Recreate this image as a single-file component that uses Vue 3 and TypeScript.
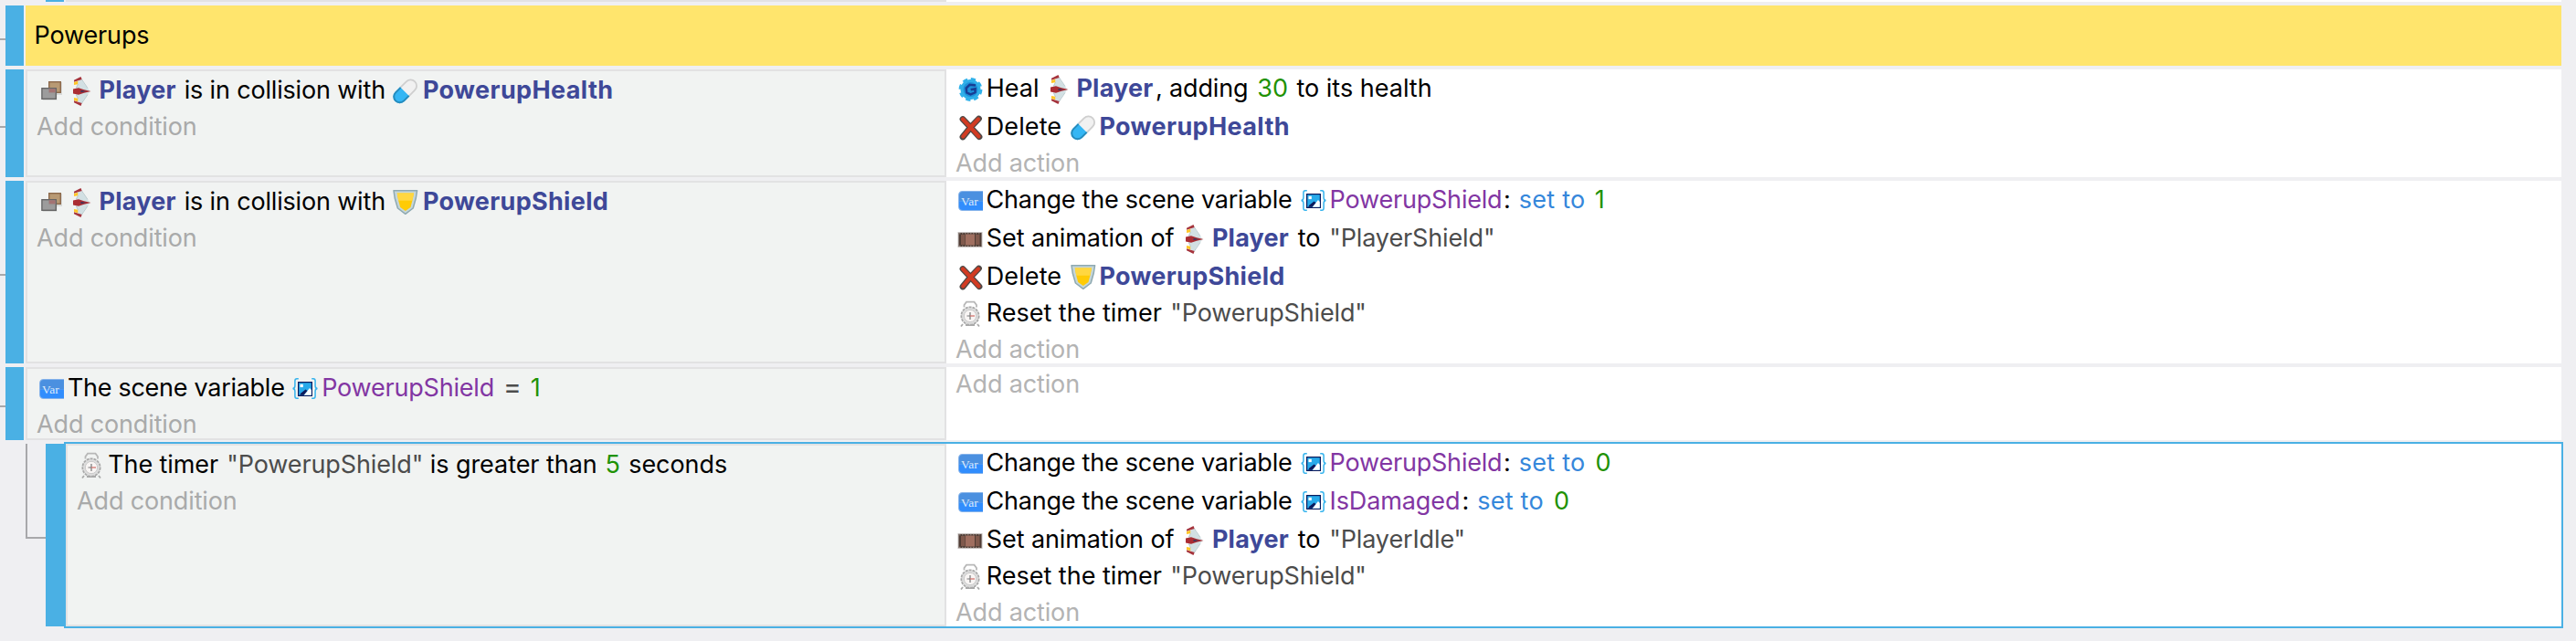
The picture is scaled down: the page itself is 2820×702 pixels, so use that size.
<script setup lang="ts">
import type { CSSProperties } from 'vue'

type Kind = 'icon' | 'text' | 'object' | 'variable' | 'number' | 'string' | 'equals' | 'operator'
interface Part { kind: Kind; at: number; value: string; spacing: number }
interface Line { parts: Part[]; tall: boolean }
interface EventRow { id: string; conditions: Line[]; actions: Line[] }

const p = (kind: Kind, at: number, value: string, spacing = 0): Part => ({ kind, at, value, spacing })
const line = (parts: Part[], tall = true): Line => ({ parts, tall })

const setVariable = (name: string, nameSpacing: number, end: number, value: string): Line =>
  line([
    p('icon', 3, 'var'), p('text', 33.6, 'Change the scene variable', -0.24), p('icon', 378, 'scene'),
    p('variable', 409.6, name, nameSpacing), p('text', end, ':'), p('operator', end + 16.8, 'set to', 0.25),
    p('number', end + (value === '1' ? 99.8 : 100.6), value),
  ])

const setAnimation = (name: string, tall: boolean): Line =>
  line([
    p('icon', 2, 'film'), p('text', 33.8, 'Set animation of', -0.1), p('icon', 252, 'ship'),
    p('object', 280.9, 'Player', 0.22), p('text', 374.8, 'to'), p('string', 409.3, `"${name}"`, -0.13),
  ], tall)

const resetTimer = (): Line =>
  line([p('icon', 4, 'alarm'), p('text', 33.7, 'Reset the timer', 0), p('string', 235.3, '"PowerupShield"', -0.14)], false)

const deleteObject = (icon: string, name: string, spacing: number): Line =>
  line([p('icon', 3, 'cross'), p('text', 33.7, 'Delete', 0.12), p('icon', 126, icon), p('object', 157.4, name, spacing)], false)

const collision = (icon: string, name: string, spacing: number): Line =>
  line([
    p('icon', 4, 'collision'), p('icon', 40, 'ship'), p('object', 68.6, 'Player', 0.22),
    p('text', 161.7, 'is in collision with', -0.17), p('icon', 390, icon), p('object', 422.9, name, spacing),
  ], false)

const events: EventRow[] = [
  {
    id: 'health',
    conditions: [collision('pill', 'PowerupHealth', 0.38)],
    actions: [
      line([
        p('icon', 3, 'gear'), p('text', 33.7, 'Heal'), p('icon', 104, 'ship'), p('object', 132.4, 'Player', 0.22),
        p('text', 219, ', adding', -0.15), p('number', 330.3, '30'), p('text', 373.5, 'to its health'),
      ]),
      deleteObject('pill', 'PowerupHealth', 0.38),
    ],
  },
  {
    id: 'shield',
    conditions: [collision('shield', 'PowerupShield', 0.31)],
    actions: [
      setVariable('PowerupShield', -0.2, 600, '1'),
      setAnimation('PlayerShield', true),
      deleteObject('shield', 'PowerupShield', 0.31),
      resetTimer(),
    ],
  },
  {
    id: 'shielded',
    conditions: [
      line([
        p('icon', 3, 'var'), p('text', 33.9, 'The scene variable', -0.28), p('icon', 280, 'scene'),
        p('variable', 312.2, 'PowerupShield', -0.2), p('equals', 511, '='), p('number', 540.7, '1'),
      ], false),
    ],
    actions: [],
  },
  {
    id: 'expired',
    conditions: [
      line([
        p('icon', 4, 'alarm'), p('text', 34.2, 'The timer', -0.1), p('string', 164.3, '"PowerupShield"', -0.12),
        p('text', 386.7, 'is greater than', -0.05), p('number', 578.5, '5'), p('text', 604.3, 'seconds', -0.07),
      ], false),
    ],
    actions: [
      setVariable('PowerupShield', -0.2, 600, '0'),
      setVariable('IsDamaged', -0.12, 554.4, '0'),
      setAnimation('PlayerIdle', false),
      resetTimer(),
    ],
  },
]

/* Every part fills the room up to where the next one starts. */
function slot(parts: Part[], i: number): CSSProperties {
  const next = parts[i + 1]
  return {
    marginLeft: i === 0 ? `${parts[i].at}px` : undefined,
    width: next ? `${next.at - parts[i].at}px` : undefined,
    letterSpacing: `${parts[i].spacing}px`,
  }
}
</script>

<template>
  <main class="sheet">
    <div class="previous"><i class="handle"></i><i class="left"></i><i class="right"></i></div>

    <section class="event comment">
      <i class="handle"></i>
      <div class="note">Powerups</div>
    </section>

    <section v-for="ev in events" :key="ev.id" class="event" :class="ev.id">
      <i class="handle"></i>
      <div class="panel">
        <div v-for="side in (['conditions', 'actions'] as const)" :key="side" :class="[side, { empty: !ev[side].length }]">
          <div v-for="(ln, n) in ev[side]" :key="n" class="line" :class="{ tall: ln.tall }">
            <span v-for="(part, i) in ln.parts" :key="i" class="part" :class="part.kind" :style="slot(ln.parts, i)">
              <svg v-if="part.kind === 'icon'" width="28" height="40" viewBox="0 0 28 40">
                <g v-if="part.value === 'collision'">
                  <path d="M10 12h14v14H10z" fill="#777" opacity=".2" />
                  <rect x="9.7" y="11.7" width="12.6" height="11.6" fill="#b89a74" stroke="#8d6a4c" stroke-width="1.4" />
                  <rect x="2.7" y="19.7" width="15.6" height="12" fill="#777" opacity=".25" />
                  <rect x="1.9" y="18.7" width="15.4" height="11.6" fill="#999" fill-opacity=".95" stroke="#666" stroke-width="1.4" />
                  <path d="M9.7 19.3h7v4h-7z" fill="#a47373" />
                </g>
                <g v-else-if="part.value === 'ship'">
                  <path d="M4.500 11.500 9 8.500 12 13.500 18.500 22 12 30.500 9 35.500 4.500 32.500 5 29 3 26V18L5 15z" fill="#d2e0e3" />
                  <path d="M9.500 9l6.500 9.500M9.500 35l6.500-9.500M3.500 18l2-4M3.500 26l2 4" fill="none" stroke="#b3c5ca" stroke-width=".9" />
                  <path d="M1 9.800 8.500 6l1.200 3L1 11.800zM1 34.200 8.500 38l1.200-3L1 32.200z" fill="#a5343c" />
                  <path d="M1 12l4.200-1.200v3.400L1 15zM1 32l4.200 1.200v-3.400L1 29z" fill="#ffc629" />
                  <path d="M0 19.500 6 18.200 12 20.300 19.500 22 12 23.700 6 25.800 0 24.500z" fill="#ab2d33" />
                  <path d="M8.500 20.800 14.500 22 8.500 23.200z" fill="#43365a" />
                </g>
                <g v-else-if="part.value === 'pill'">
                  <g transform="rotate(-45 13.500 22)">
                    <path d="M13 14.700H22a7.300 7.300 0 0 1 0 14.600H13z" fill="#f1f1f1" />
                    <path d="M13 15.400H22a6.600 6.600 0 0 1 0 13.200H13" fill="none" stroke="#cfcfcf" stroke-width="1.800" />
                    <path d="M13 14.700H5.200a7.300 7.300 0 0 0 0 14.600H13z" fill="#34b6f4" />
                    <path d="M13 15.600H5.200a6.400 6.400 0 0 0 0 12.800H13" fill="none" stroke="#268bbc" stroke-width="1.900" />
                  </g>
                </g>
                <g v-else-if="part.value === 'shield'">
                  <path d="M1 8.700H26.600L25.300 17 22.200 28 13.800 34.300 5.400 28 2.200 17z" fill="#c5d6d9" stroke="#8ea9b1" stroke-width="1.500" stroke-linejoin="round" />
                  <path d="M4.700 11.500H23L21.300 20 19.500 27 13.800 31 8.200 27 6.300 20z" fill="#ffcb05" />
                  <path d="M4.700 11.500H23L21.500 19.700H6.200z" fill="#ffd740" />
                </g>
                <g v-else-if="part.value === 'gear'">
                  <circle cx="13.500" cy="22" r="11.600" fill="none" stroke="#2fb1ea" stroke-width="2.600" stroke-dasharray="5.300 3.800" />
                  <circle cx="13.500" cy="22" r="11" fill="#2fafe8" />
                  <circle cx="13.500" cy="22" r="8" fill="#1d91d8" />
                  <path d="M19 17.500 12.500 16.800 8.700 20.500 9.300 25.500 13.500 27.500 18.500 25.300 18.600 21.200 13.700 22.200" fill="none" stroke="#173d94" stroke-width="2.500" />
                </g>
                <g v-else-if="part.value === 'cross'" stroke-linecap="round" fill="none">
                  <path d="M5 12.500 13.500 21.500 23 31.700M22.500 12 13.500 21.500 5 32" stroke="#4f4845" stroke-width="6.800" />
                  <path d="M5 12.500 13.500 21.500 22.500 31.500M22 12.500 13.500 21.500 5.300 31.500" stroke="#d23b22" stroke-width="4.200" />
                </g>
                <g v-else-if="part.value === 'var'">
                  <path d="M4.500 11H27V33H4.500A4.500 4.500 0 0 1 0 28.500V15.500A4.500 4.500 0 0 1 4.500 11z" fill="#86b3ea" />
                  <path d="M5 12H27V22.500H1V16A4 4 0 0 1 5 12z" fill="#4b90e0" />
                  <path d="M1 22.500H27V32H5A4 4 0 0 1 1 28z" fill="#318dfd" />
                  <text x="3" y="27" class="glyph">Var</text>
                </g>
                <g v-else-if="part.value === 'scene'">
                  <path d="M6.800 10.700H5Q2.900 10.700 2.900 13V18.500Q2.900 21.300.500 21.500Q2.900 21.700 2.900 24.500V30Q2.900 32.300 5 32.300H6.800M21.200 10.700H23Q25.100 10.700 25.100 13V18.500Q25.100 21.300 27.500 21.500Q25.100 21.700 25.100 24.500V30Q25.100 32.300 23 32.300H21.200" fill="none" stroke="#35b3ed" stroke-width="1.500" />
                  <rect x="6.600" y="14.600" width="14.800" height="14.800" fill="#27aaea" stroke="#0b1a5c" stroke-width="1.200" />
                  <path d="M12.500 28.800 16.500 24l2.500-3 1.800 2v5.800z" fill="#fff" />
                  <path d="M8 28.800 9.500 26.500 14.500 22.500 16.500 24 12.500 28.800z" fill="#0b1a5c" />
                  <rect x="8.500" y="16.800" width="3.300" height="3.300" fill="#fff" />
                </g>
                <g v-else-if="part.value === 'film'">
                  <rect x=".5" y="14" width="27" height="17" fill="#c4bfbd" />
                  <rect x="1.500" y="15" width="25" height="15" fill="#4f3c34" />
                  <path d="M4 17h4.500v11H4zM20 17h4.500v11H20z" fill="#80594c" />
                  <path d="M9 16.500h10v12H9z" fill="#a06f60" />
                  <path d="M2 15.800h24M2 29.300h24" stroke="#9a8c86" stroke-width="1" stroke-dasharray="1.500 1.500" />
                </g>
                <g v-else-if="part.value === 'alarm'" fill="none" stroke="#a9a9a9">
                  <path d="M5.500 14.500V12L8 8.700h8.500L19 12v2.500" stroke="#b7b7b7" stroke-width="1.800" />
                  <path d="M4 33l-2 2.500M20 33l2 2.500M7 34h10" stroke-width="1.800" />
                  <circle cx="12" cy="24" r="9.700" fill="#ddd" stroke-width="1.700" stroke-dasharray="3 1" />
                  <circle cx="12" cy="24" r="6.700" fill="#f8f5f4" stroke="#c9c9c9" stroke-width="1" />
                  <path d="M12 20v8M8.500 24H12" stroke="#777" stroke-width="1.200" />
                  <path d="M12 24h5" stroke="#d37470" stroke-width="1.300" />
                </g>
              </svg>
              <template v-else>{{ part.value }}</template>
            </span>
          </div>
          <div class="line add">{{ side === 'conditions' ? 'Add condition' : 'Add action' }}</div>
        </div>
      </div>
    </section>
  </main>
</template>

<style scoped>
.sheet {
  display: grid;
  grid-template-rows: 2px 66px 118px 200px 80px 200px;
  row-gap: 4px;
  height: 702px;
  overflow: hidden;
  box-sizing: border-box;
  background: #efeff2;
  color: #000;
  font: 27px/42px Inter, "Liberation Sans", sans-serif;
}
.sheet > * {
  width: 2798px;
  margin-left: 6px;
}
.previous {
  display: flex;
}
.previous .handle {
  flex: none;
  margin-left: 44px;
}
.previous .left {
  flex: none;
  width: 964px;
  margin-left: 2px;
  background: #e2e2e3;
}
.previous .right {
  flex: 1;
  background: #fff;
}
.handle {
  flex: none;
  width: 20px;
  background: #4ab0e4;
}
.event {
  display: flex;
  gap: 2px;
  position: relative;
}
/* connector to the tree trunk on the left */
.event::before {
  content: '';
  position: absolute;
  left: -6px;
  top: calc(50% + 3px);
  width: 6px;
  height: 2px;
  background: #a8a8ab;
}
.event.shielded::before {
  top: 42px;
}
.event.shield::before {
  top: 102px;
}
.event.expired::before {
  left: -22px;
  top: 0;
  width: 20px;
  height: 102px;
  border: solid #a8a8ab;
  border-width: 0 0 2px 2px;
  background: none;
}
.sheet > .expired {
  width: 2754px;
  margin-left: 50px;
}
.note {
  flex: 1;
  padding: 12px 0 0 9.5px;
  background: #ffe56d;
  letter-spacing: -0.14px;
}
.panel {
  flex: 1;
  display: flex;
  min-width: 0;
}
.conditions {
  flex: none;
  box-sizing: border-box;
  width: 1008px;
  padding-left: 10px;
  border: 2px solid #e2e2e3;
  background: #f1f3f2;
}
.actions {
  flex: 1;
  padding-left: 10px;
  background: #fff;
}
.actions.empty {
  margin-top: 0;
}
.actions.empty .line {
  line-height: 38px;
}
.expired .conditions {
  width: 964px;
}
.expired .panel {
  outline: 2px solid #4ab0e4;
}
.line {
  display: flex;
  height: 40px;
  white-space: pre;
}
.line.tall {
  height: 42px;
}
.part {
  flex: none;
  height: 40px;
}
.part svg {
  display: block;
  overflow: visible;
}
.object {
  color: #3e4898;
  font-weight: 700;
}
.variable {
  color: #8236a3;
}
.number {
  color: #1f9205;
}
.string {
  color: #4c4c4c;
}
.equals {
  color: #4c4c4c;
  font-size: 30px;
  line-height: 38px;
}
.operator {
  color: #3587db;
}
.line.add {
  letter-spacing: -0.14px;
  color: #a9aaaa;
}
.actions .line.add {
  color: #b3b3b3;
}
.glyph {
  font: 13.5px "Liberation Serif", serif;
  fill: #dbe9fb;
}
</style>

<style>
body {
  margin: 0;
  overflow: hidden;
}
</style>
